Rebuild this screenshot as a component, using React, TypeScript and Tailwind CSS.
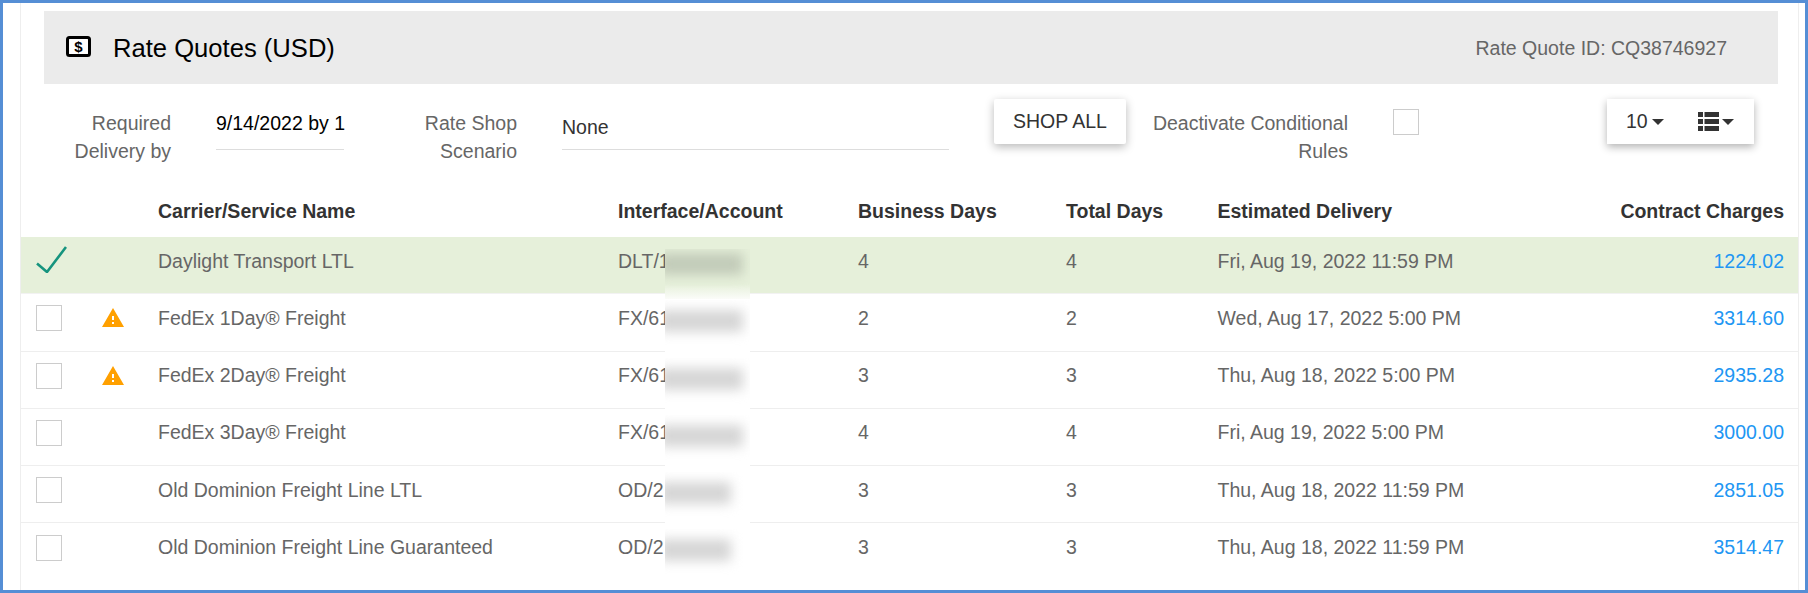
const rows = [
  { name: "Daylight Transport LTL", acct: "DLT/1", biz: "4", total: "4", eta: "Fri, Aug 19, 2022 11:59 PM", charge: "1224.02", selected: true, warn: false, wide: true },
  { name: "FedEx 1Day® Freight", acct: "FX/61", biz: "2", total: "2", eta: "Wed, Aug 17, 2022 5:00 PM", charge: "3314.60", selected: false, warn: true, wide: true },
  { name: "FedEx 2Day® Freight", acct: "FX/61", biz: "3", total: "3", eta: "Thu, Aug 18, 2022 5:00 PM", charge: "2935.28", selected: false, warn: true, wide: true },
  { name: "FedEx 3Day® Freight", acct: "FX/61", biz: "4", total: "4", eta: "Fri, Aug 19, 2022 5:00 PM", charge: "3000.00", selected: false, warn: false, wide: true },
  { name: "Old Dominion Freight Line LTL", acct: "OD/2", biz: "3", total: "3", eta: "Thu, Aug 18, 2022 11:59 PM", charge: "2851.05", selected: false, warn: false, wide: false },
  { name: "Old Dominion Freight Line Guaranteed", acct: "OD/2", biz: "3", total: "3", eta: "Thu, Aug 18, 2022 11:59 PM", charge: "3514.47", selected: false, warn: false, wide: false },
];

const cols = "grid grid-cols-[65px_72px_460px_240px_208px_151.5px_1fr_200px]";

function Caret() {
  return (
    <svg width="12" height="6" viewBox="0 0 12 6" className="block">
      <path d="M0 0h12L6 6z" fill="#333" />
    </svg>
  );
}

function Box({ className = "" }: { className?: string }) {
  return <div className={`w-[26px] h-[26px] border border-[#cccccc] bg-white ${className}`} />;
}

function MoneyIcon() {
  return (
    <svg width="25" height="21" viewBox="0 0 25 21" className="block">
      <rect x="1.5" y="1.5" width="22" height="18" rx="2" fill="#fff" stroke="#000" strokeWidth="3" />
      <text x="12.5" y="16" textAnchor="middle" fontSize="15" fontWeight="700" fontFamily="Liberation Sans, sans-serif" fill="#000">$</text>
    </svg>
  );
}

function WarnIcon() {
  return (
    <svg width="24" height="24" viewBox="0 0 24 24" className="block">
      <path d="M1 21h22L12 2 1 21zm12-3h-2v-2h2v2zm0-4h-2v-4h2v4z" fill="#ffa000" />
    </svg>
  );
}

function ListIcon() {
  return (
    <svg width="21" height="19" viewBox="0 0 21 19" className="block" fill="#333">
      <rect x="0" y="0" width="5" height="5" />
      <rect x="6.5" y="0" width="14.5" height="5" />
      <rect x="0" y="7" width="5" height="5" />
      <rect x="6.5" y="7" width="14.5" height="5" />
      <rect x="0" y="14" width="5" height="5" />
      <rect x="6.5" y="14" width="14.5" height="5" />
    </svg>
  );
}

function Smudge({ selected, wide }: { selected: boolean; wide: boolean }) {
  return (
    <div
      className={`absolute left-[47px] w-[85px] overflow-hidden ${
        selected
          ? "top-[12px] h-[50px] bg-gradient-to-b from-[#e6f0da] from-70% to-[#fbfcf9]"
          : "top-[6px] h-[57px] bg-white"
      }`}
    >
      <div
        className={`absolute left-[-6px] h-[22px] blur-[6px] ${
          selected ? "top-[4px] bg-[#c2cbb9]" : "top-[10px] bg-[#d6d6d6]"
        } ${wide ? "w-[84px]" : "w-[72px]"}`}
      />
    </div>
  );
}

export default function App() {
  return (
    <div className="h-[593px] w-[1808px] box-border border-[3px] border-[#558ed5] bg-white overflow-hidden font-['Liberation_Sans',Arial,sans-serif] text-[19.5px]">
      <div className="h-full ml-[17px] mr-[6px] border-x border-[#eeeeee]">
        <div className="pt-[8px] pl-[23px] pr-[20px]">
          <div className="h-[73px] bg-[#ebebeb] flex items-center justify-between pl-[22px] pr-[51px] pt-[2px]">
            <div className="flex items-center gap-[22px]">
              <div className="-mt-[4px]"><MoneyIcon /></div>
              <span className="text-[25.6px] text-black">Rate Quotes (USD)</span>
            </div>
            <span className="text-[#666666]">Rate Quote ID: CQ38746927</span>
          </div>
        </div>

        <div className="h-[106px] flex items-start">
          <div className="ml-[38px] w-[112px] mt-[25px] text-right text-[#666666] leading-[28px]">Required Delivery by</div>
          <div className="ml-[45px] mt-[25px] w-[128px] h-[41px] border-b border-[#dddddd] whitespace-nowrap leading-[28px] text-black">9/14/2022 by 1</div>
          <div className="ml-[63px] w-[110px] mt-[25px] text-right text-[#666666] leading-[28px]">Rate Shop Scenario</div>
          <div className="ml-[45px] mt-[25px] w-[387px] h-[41px] border-b border-[#dddddd] text-[#333333] pt-[4px] leading-[28px]">None</div>
          <button className="ml-[45px] mt-[15px] w-[132px] h-[45px] bg-white rounded-[2px] shadow-[0_3px_10px_rgba(0,0,0,0.28)] text-[#333333]">SHOP ALL</button>
          <div className="ml-[22px] w-[200px] mt-[25px] text-right text-[#666666] leading-[28px]">Deactivate Conditional Rules</div>
          <Box className="ml-[45px] mt-[25px]" />
          <div className="ml-[188px] mt-[15px] w-[147px] h-[45px] bg-white shadow-[0_3px_8px_rgba(0,0,0,0.3)] flex items-center text-[#333333] pl-[19px]">
            <span>10</span>
            <span className="ml-[4px]"><Caret /></span>
            <span className="ml-[34px]"><ListIcon /></span>
            <span className="ml-[3px]"><Caret /></span>
          </div>
        </div>

        <div className={`${cols} h-[47px] items-center pb-[3px] font-bold text-[#333333]`}>
          <div />
          <div />
          <div>Carrier/Service Name</div>
          <div>Interface/Account</div>
          <div>Business Days</div>
          <div>Total Days</div>
          <div>Estimated Delivery</div>
          <div className="text-right pr-[14px]">Contract Charges</div>
        </div>

        {rows.map((r, i) => (
          <div
            key={i}
            className={`${cols} h-[57.25px] items-center pb-[8px] text-[#666666] ${
              r.selected ? "bg-[#e6f0da] border-b border-[#f2f2f2]" : "border-b border-[#eeeeee] last:border-b-0"
            }`}
          >
            <div className="pl-[15px]">
              {r.selected ? (
                <svg width="31" height="27" viewBox="0 0 31 27" className="block -mt-[3px]">
                  <path d="M1 17.5L11 26L30 1" fill="none" stroke="#16947e" strokeWidth="2.6" />
                </svg>
              ) : (
                <Box />
              )}
            </div>
            <div className="pl-[15px]">{r.warn && <WarnIcon />}</div>
            <div>{r.name}</div>
            <div className="relative self-stretch flex items-center">
              <span>{r.acct}</span>
              <Smudge selected={r.selected} wide={r.wide} />
            </div>
            <div>{r.biz}</div>
            <div>{r.total}</div>
            <div>{r.eta}</div>
            <div className="text-right pr-[14px] text-[#2196f3]">{r.charge}</div>
          </div>
        ))}
      </div>
    </div>
  );
}
